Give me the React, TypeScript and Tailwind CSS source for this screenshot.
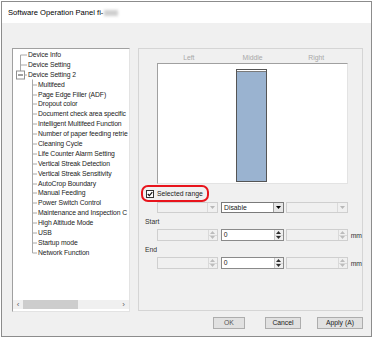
const tree: { label: string; kind: "first" | "mid" | "open" | "child" | "lastChild" }[] = [
  { label: "Device Info", kind: "first" },
  { label: "Device Setting", kind: "mid" },
  { label: "Device Setting 2", kind: "open" },
  { label: "Multifeed", kind: "child" },
  { label: "Page Edge Filler (ADF)", kind: "child" },
  { label: "Dropout color", kind: "child" },
  { label: "Document check area specific", kind: "child" },
  { label: "Intelligent Multifeed Function", kind: "child" },
  { label: "Number of paper feeding retrie", kind: "child" },
  { label: "Cleaning Cycle", kind: "child" },
  { label: "Life Counter Alarm Setting", kind: "child" },
  { label: "Vertical Streak Detection", kind: "child" },
  { label: "Vertical Streak Sensitivity", kind: "child" },
  { label: "AutoCrop Boundary", kind: "child" },
  { label: "Manual Feeding", kind: "child" },
  { label: "Power Switch Control", kind: "child" },
  { label: "Maintenance and Inspection C", kind: "child" },
  { label: "High Altitude Mode", kind: "child" },
  { label: "USB", kind: "child" },
  { label: "Startup mode", kind: "child" },
  { label: "Network Function", kind: "lastChild" },
];

function Gutter({ kind }: { kind: string }) {
  const line = "#a8a8a8";
  if (kind === "child" || kind === "lastChild") {
    return (
      <svg width="25" height="10" className="shrink-0 overflow-visible">
        <line x1="19.5" y1="-0.5" x2="19.5" y2={kind === "child" ? 10.5 : 5} stroke={line} />
        <line x1="19.5" y1="5" x2="24" y2="5" stroke={line} />
      </svg>
    );
  }
  return (
    <svg width="15" height="10" className="shrink-0 overflow-visible">
      {kind === "first" && <line x1="7.5" y1="5" x2="7.5" y2="10.5" stroke={line} />}
      {kind === "mid" && <line x1="7.5" y1="-0.5" x2="7.5" y2="10.5" stroke={line} />}
      {kind === "open" ? (
        <>
          <line x1="7.5" y1="-0.5" x2="7.5" y2="1" stroke={line} />
          <rect x="3.5" y="1" width="8" height="8" fill="white" stroke="#909090" />
          <line x1="5" y1="5" x2="10" y2="5" stroke="#404040" />
          <line x1="11.5" y1="5" x2="14" y2="5" stroke={line} />
        </>
      ) : (
        <line x1="7.5" y1="5" x2="14" y2="5" stroke={line} />
      )}
    </svg>
  );
}

function Arrow({ up, color }: { up?: boolean; color: string }) {
  return (
    <svg width="5" height="3" viewBox="0 0 5 3">
      <path d={up ? "M0 3 L2.5 0 L5 3 Z" : "M0 0 L5 0 L2.5 3 Z"} fill={color} />
    </svg>
  );
}

function Combo({ w, value }: { w: string; value?: string }) {
  const on = value !== undefined;
  return (
    <div
      className={`flex h-[11px] ${w} border ${on ? "border-[#7a7a7a] bg-white" : "border-[#cfcfcf] bg-[#f0f0f0]"}`}
    >
      <div className="flex-1 pl-[2px] leading-[9px]">{value}</div>
      <div
        className={`flex w-[10px] items-center justify-center border-l ${on ? "border-[#a0a0a0] bg-[#e6e6e6]" : "border-[#dadada]"}`}
      >
        <Arrow color={on ? "#000" : "#b8b8b8"} />
      </div>
    </div>
  );
}

function Spin({ w, value }: { w: string; value?: string }) {
  const on = value !== undefined;
  const c = on ? "#303030" : "#bcbcbc";
  return (
    <div
      className={`flex h-[12px] ${w} border ${on ? "border-[#8a8a8a] bg-white" : "border-[#cfcfcf] bg-[#f0f0f0]"}`}
    >
      <div className="flex-1 pl-[2px] leading-[10px]">{value}</div>
      <div className={`flex w-[9px] flex-col border-l ${on ? "border-[#c8c8c8] bg-[#f0f0f0]" : "border-[#dadada]"}`}>
        <div className="flex flex-1 items-center justify-center border-b border-[#d8d8d8]">
          <Arrow up color={c} />
        </div>
        <div className="flex flex-1 items-center justify-center">
          <Arrow color={c} />
        </div>
      </div>
    </div>
  );
}

function SpinRow() {
  return (
    <div className="ml-[18px] mt-[2px] flex items-center">
      <Spin w="w-[61px]" />
      <div className="ml-[3px]">
        <Spin w="w-[63px]" value="0" />
      </div>
      <div className="ml-[2px]">
        <Spin w="w-[62px]" />
      </div>
      <span className="ml-[3px] mt-[2px] text-[#303030]">mm</span>
    </div>
  );
}

export default function App() {
  return (
    <div className="h-[340px] w-[375px] overflow-hidden bg-white pl-[1px] pt-[1px] font-['Liberation_Sans',Arial,sans-serif] text-[6.8px] leading-[10px] text-[#222222]">
      <div className="flex h-[336px] w-[371px] flex-col border border-[#8c8c8c] bg-[#f0f0f0]">
        <div className="flex h-[21px] shrink-0 items-center bg-white pl-[6px] text-[7.6px] text-black">
          Software Operation Panel fi-
          <span className="ml-[1px] inline-block h-[6px] w-[14px] bg-[#cfcfcf] blur-[1.5px]" />
        </div>

        <div className="flex pl-[10px] pt-[25px]">
          {/* tree */}
          <div className="flex h-[264px] w-[118px] flex-col border border-b-[#e3e3e3] border-l-[#a0a0a0] border-r-[#e3e3e3] border-t-[#a0a0a0] bg-white">
            <div className="flex-1 overflow-hidden pt-[1px] tracking-[-0.1px]">
              {tree.map((t) => (
                <div key={t.label} className="flex h-[9.9px] items-center whitespace-nowrap">
                  <Gutter kind={t.kind} />
                  <span>{t.label}</span>
                </div>
              ))}
            </div>
            <div className="mb-[2px] flex h-[9px] items-center bg-[#f0f0f0] text-[#606060]">
              <span className="w-[10px] text-center text-[8px] leading-[9px]">‹</span>
              <div className="h-[9px] w-[55px] bg-[#cdcdcd]" />
              <div className="flex-1" />
              <span className="w-[11px] text-center text-[8px] leading-[9px]">›</span>
            </div>
          </div>

          {/* settings group */}
          <div className="ml-[8px] h-[263px] w-[225px] border border-[#d5d5d5]">
            <div className="ml-[18px] mt-[4px] grid h-[10px] w-[191px] grid-cols-3 text-center text-[#a8a8a8]">
              <span>Left</span>
              <span>Middle</span>
              <span>Right</span>
            </div>
            <div className="ml-[18px] h-[121px] w-[191px] border border-b-[#e3e3e3] border-l-[#a0a0a0] border-r-[#e3e3e3] border-t-[#a0a0a0] bg-white pl-[78px] pt-[5px]">
              <div className="flex h-[113px] w-[31px] flex-col border border-[#555555]">
                <div className="h-[1px] bg-white" />
                <div className="h-[1px] bg-[#7a7a7a]" />
                <div className="flex-1 bg-[#9ab3d0]" />
              </div>
            </div>

            <div className="ml-[2px] mt-[1px] flex h-[17px] w-[68px] items-center rounded-[7px] border-2 border-[#e8141c] pl-[3px]">
              <div className="flex h-[8px] w-[8px] items-center justify-center border border-[#333333] bg-white">
                <svg width="6" height="6" viewBox="0 0 6 6">
                  <path d="M0.8 3 L2.4 4.6 L5.3 1.2" fill="none" stroke="#111" strokeWidth="1.2" />
                </svg>
              </div>
              <span className="ml-[3px] whitespace-nowrap">Selected range</span>
            </div>

            <div className="ml-[18px] flex">
              <Combo w="w-[61px]" />
              <div className="ml-[3px]">
                <Combo w="w-[63px]" value="Disable" />
              </div>
              <div className="ml-[2px]">
                <Combo w="w-[62px]" />
              </div>
            </div>

            <div className="ml-[6px] mt-[4px] h-[10px] text-[#303030]">Start</div>
            <SpinRow />
            <div className="ml-[6px] mt-[4px] h-[10px] text-[#303030]">End</div>
            <SpinRow />
          </div>
        </div>

        <div className="mt-[5px] flex justify-end pr-[8px]">
          <button className="h-[12px] w-[32px] border border-[#adadad] bg-[#e1e1e1] leading-[10px] text-[#555]">OK</button>
          <button className="ml-[20px] h-[12px] w-[36px] border border-[#adadad] bg-[#e1e1e1] leading-[10px]">Cancel</button>
          <button className="ml-[16px] h-[12px] w-[46px] border border-[#adadad] bg-[#e1e1e1] leading-[10px]">Apply (A)</button>
        </div>
      </div>
    </div>
  );
}
